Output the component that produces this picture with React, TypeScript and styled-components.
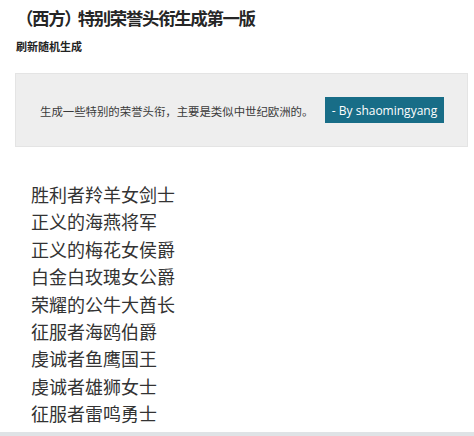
import styled, { createGlobalStyle } from "styled-components";

const GlobalStyle = createGlobalStyle`
  html, body {
    margin: 0;
    padding: 0;
    background: #ffffff;
  }
  body {
    font-family: "Noto Sans CJK SC", "Noto Sans", sans-serif;
    color: #333333;
  }
`;

const Page = styled.div`
  width: 474px;
  height: 436px;
  overflow: hidden;
  display: flex;
  flex-direction: column;
  padding: 0 6px 0 15px;
  box-sizing: border-box;
`;

const Title = styled.h1`
  margin: 7px 0 0 1px;
  font-size: 17.4px;
  line-height: 22px;
  font-weight: 700;
  letter-spacing: -1.3px;
  color: #262626;
  white-space: nowrap;
`;

/* the closing bracket in the original font is narrower */
const CloseParen = styled.span`
  letter-spacing: -4px;
`;

const SubTitle = styled.h2`
  margin: 9px 0 0 1px;
  font-size: 11px;
  line-height: 16px;
  font-weight: 700;
  color: #222222;
`;

const Notice = styled.div`
  margin-top: 19px;
  height: 74px;
  box-sizing: border-box;
  background: #eeeeee;
  border: 1px solid #e4e4e4;
  display: flex;
  align-items: center;
  justify-content: space-between;
  padding: 0 23px 0 24px;
`;

const NoticeText = styled.span`
  font-size: 11.4px;
  line-height: 16px;
  color: #3a3a3a;
  margin-top: 2px;
`;

const AuthorButton = styled.button`
  width: 119px;
  height: 26px;
  border: none;
  background: #186d87;
  color: #ffffff;
  font-family: "Open Sans", "Noto Sans", sans-serif;
  font-size: 12px;
  padding: 0;
  cursor: pointer;
`;

const TitleList = styled.ul`
  list-style: none;
  margin: 34px 0 0 16px;
  padding: 0;
`;

const TitleItem = styled.li`
  font-size: 18px;
  line-height: 27.4px;
  color: #333333;
`;

const BottomBar = styled.div`
  margin: auto -6px 0 -15px;
  height: 4px;
  background: #dfe3e6;
  flex-shrink: 0;
`;

const titles = [
  "胜利者羚羊女剑士",
  "正义的海燕将军",
  "正义的梅花女侯爵",
  "白金白玫瑰女公爵",
  "荣耀的公牛大酋长",
  "征服者海鸥伯爵",
  "虔诚者鱼鹰国王",
  "虔诚者雄狮女士",
  "征服者雷鸣勇士",
];

export default function App() {
  return (
    <>
      <GlobalStyle />
      <Page>
        <Title>
          （西方<CloseParen>）</CloseParen>特别荣誉头衔生成第一版
        </Title>
        <SubTitle>刷新随机生成</SubTitle>
        <Notice>
          <NoticeText>生成一些特别的荣誉头衔，主要是类似中世纪欧洲的。</NoticeText>
          <AuthorButton>- By shaomingyang</AuthorButton>
        </Notice>
        <TitleList>
          {titles.map((t, i) => (
            <TitleItem key={i}>{t}</TitleItem>
          ))}
        </TitleList>
        <BottomBar />
      </Page>
    </>
  );
}
